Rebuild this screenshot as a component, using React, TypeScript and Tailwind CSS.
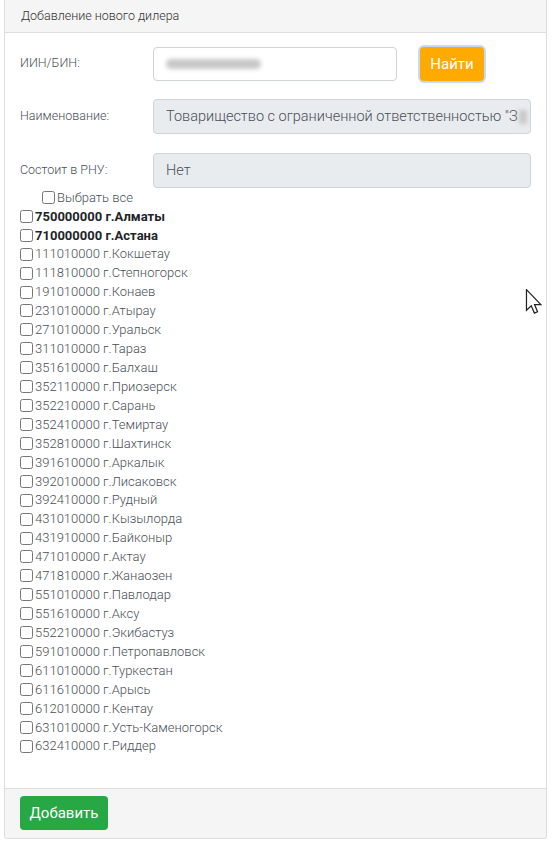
const cities: { code: string; name: string; bold?: boolean }[] = [
  { code: '750000000', name: 'г.Алматы', bold: true },
  { code: '710000000', name: 'г.Астана', bold: true },
  { code: '111010000', name: 'г.Кокшетау' },
  { code: '111810000', name: 'г.Степногорск' },
  { code: '191010000', name: 'г.Конаев' },
  { code: '231010000', name: 'г.Атырау' },
  { code: '271010000', name: 'г.Уральск' },
  { code: '311010000', name: 'г.Тараз' },
  { code: '351610000', name: 'г.Балхаш' },
  { code: '352110000', name: 'г.Приозерск' },
  { code: '352210000', name: 'г.Сарань' },
  { code: '352410000', name: 'г.Темиртау' },
  { code: '352810000', name: 'г.Шахтинск' },
  { code: '391610000', name: 'г.Аркалык' },
  { code: '392010000', name: 'г.Лисаковск' },
  { code: '392410000', name: 'г.Рудный' },
  { code: '431010000', name: 'г.Кызылорда' },
  { code: '431910000', name: 'г.Байконыр' },
  { code: '471010000', name: 'г.Актау' },
  { code: '471810000', name: 'г.Жанаозен' },
  { code: '551010000', name: 'г.Павлодар' },
  { code: '551610000', name: 'г.Аксу' },
  { code: '552210000', name: 'г.Экибастуз' },
  { code: '591010000', name: 'г.Петропавловск' },
  { code: '611010000', name: 'г.Туркестан' },
  { code: '611610000', name: 'г.Арысь' },
  { code: '612010000', name: 'г.Кентау' },
  { code: '631010000', name: 'г.Усть-Каменогорск' },
  { code: '632410000', name: 'г.Риддер' },
];

function Checkbox() {
  return (
    <input
      type="checkbox"
      className="m-0 mr-[2px] h-[13px] w-[13px] shrink-0 accent-[#0075ff]"
    />
  );
}

export default function App() {
  return (
    <div
      className="relative w-[553px] h-[844px] bg-white pl-[4px] pr-[6px] text-[13px] text-[#495057] font-light"
      style={{ fontFamily: 'Roboto, "Liberation Sans", sans-serif' }}
    >
      <div className="flex flex-col h-[839px] border-x border-b border-[#dddddd] rounded-b-[3px]">
        {/* Header */}
        <div className="h-[33px] shrink-0 flex items-center pl-[16px] bg-[#f5f5f5] border-b border-[#dddddd] text-[#333333] text-[12.5px]">
          Добавление нового дилера
        </div>

        {/* Body */}
        <div className="flex-1 pt-[14px] pl-[15px] pr-[14px]">
          <div className="flex items-start mb-[18px]">
            <div className="w-[133px] pt-[7px] leading-[18px] text-[12.5px]">ИИН/БИН:</div>
            <div className="w-[244px] h-[34px] flex items-center pl-[12px] border border-[#ced4da] rounded-[4px] bg-white">
              <span className="block w-[95px] h-[10px] rounded-full bg-[#c8c8c8] blur-[2px]" />
            </div>
            <button className="ml-[23px] h-[34px] w-[64px] rounded-[4px] bg-[#ffaa00] text-white text-[15px] font-normal ring-2 ring-[#c3dbf8]">
              Найти
            </button>
          </div>

          <div className="flex items-start mb-[19px]">
            <div className="w-[133px] pt-[8px] leading-[18px] text-[12.5px]">Наименование:</div>
            <div className="w-[378px] h-[35px] flex items-center pl-[12px] pr-[6px] border border-[#ced4da] rounded-[4px] bg-[#e9ecef] text-[14.5px] overflow-hidden whitespace-nowrap">
              <span>Товарищество с ограниченной ответственностью "З</span>
              <span className="ml-[1px] block w-[8px] h-[14px] shrink-0 bg-[#c8c8c8] blur-[2px]" />
            </div>
          </div>

          <div className="flex items-start">
            <div className="w-[133px] pt-[8px] leading-[18px] text-[12.5px]">Состоит в РНУ:</div>
            <div className="w-[378px] h-[35px] flex items-center pl-[12px] border border-[#ced4da] rounded-[4px] bg-[#e9ecef] text-[14.5px]">
              Нет
            </div>
          </div>

          <div className="flex flex-col">
            <label className="flex items-center h-[18.93px] pl-[22px]">
              <Checkbox />
              <span>Выбрать все</span>
            </label>
            {cities.map((c) => (
              <label key={c.code} className="flex items-center h-[18.93px]">
                <Checkbox />
                <span className={c.bold ? 'font-bold text-[#212529]' : ''}>
                  {c.code} {c.name}
                </span>
              </label>
            ))}
          </div>
        </div>

        {/* Footer */}
        <div className="h-[50px] shrink-0 bg-[#f5f5f5] border-t border-[#dddddd] pt-[7px] pl-[15px] rounded-b-[3px]">
          <button className="h-[34px] w-[88px] rounded-[4px] bg-[#28a745] text-white text-[15px] font-normal">
            Добавить
          </button>
        </div>
      </div>

      {/* Mouse cursor */}
      <svg
        className="absolute left-[525px] top-[289px]"
        width="18"
        height="26"
        viewBox="0 0 12 19"
      >
        <path
          d="M0.5 0.5 L0.5 15.5 L4 12.2 L6.3 17.6 L8.6 16.6 L6.4 11.4 L11 11.4 Z"
          fill="white"
          stroke="#222"
          strokeWidth="0.9"
          strokeLinejoin="miter"
        />
      </svg>
    </div>
  );
}
